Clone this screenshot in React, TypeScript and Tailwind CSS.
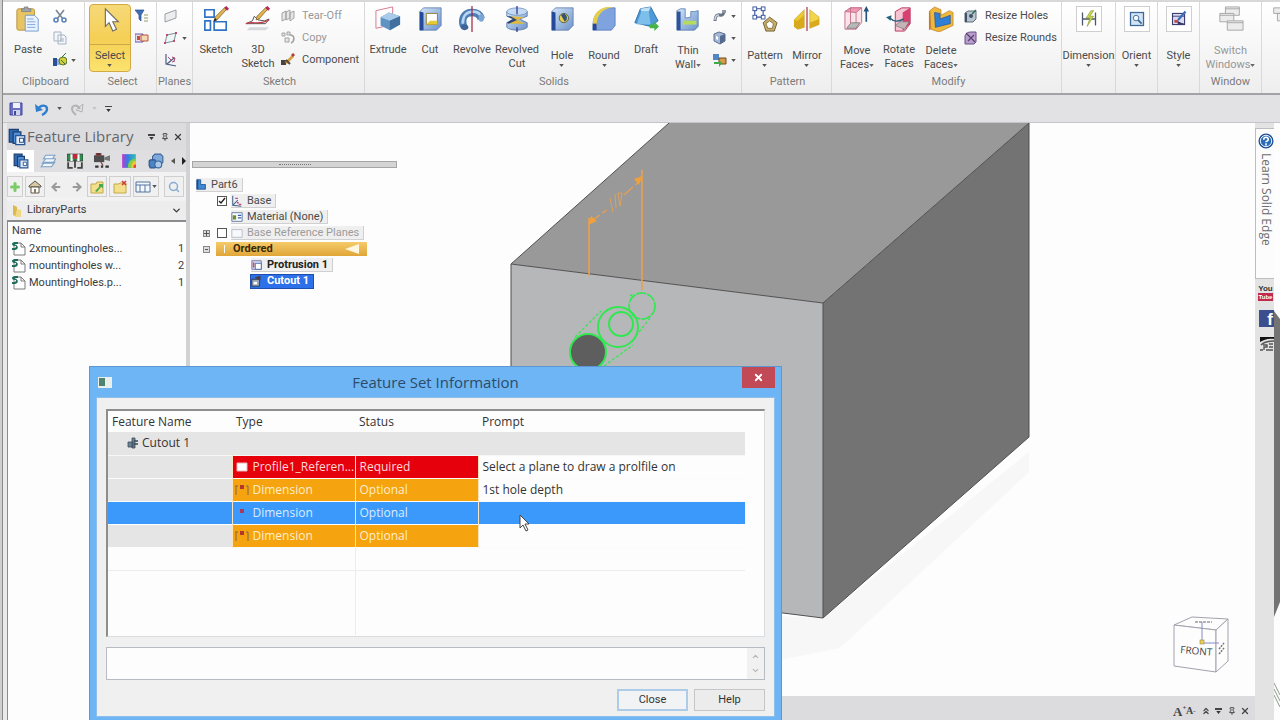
import React from 'react';
import clsx from 'clsx';
import { ArrowLeft, ArrowRight, ChevronDown, ChevronUp, ChevronsUp, Pin, Plus, Search, X } from 'lucide-react';

interface IconProps {
  name: string;
  className?: string;
}

const ICONS: Record<string, React.ReactNode> = {
  paste: (
    <>
      <rect x="2" y="3" width="19" height="23" rx="2" fill="#e8c560" stroke="#b79140" />
      <path d="M7 5V3h3V1h4v2h3v3H7z" fill="#9ea4ad" stroke="#6f757d" strokeWidth=".7" />
      <path d="M11 10h10l4 4v13H11z" fill="#eaf3fd" stroke="#6f9bd1" />
      <path d="M13 14h7M13 17h9M13 20h9M13 23h9" stroke="#7ba6dc" />
    </>
  ),
  cursor: <path d="M9 3v19l4-4 4 9 4-2-4-8h6z" fill="#fff" stroke="#6b6b6b" strokeWidth="1.2" />,
  sketch: (
    <>
      <path d="M2 4h10v8H2zM2 16h6v10H2zM12 17h13v9H12z" fill="#fff" stroke="#2f74c4" strokeWidth="1.8" />
      <path d="M12 16l3-1L26 3l-2-2L13 12z" fill="#e3b44e" stroke="#7a5c2a" strokeWidth=".8" />
      <path d="M24 1l3 3" stroke="#b5265d" strokeWidth="3" />
      <path d="M11 17l2-4 2 2z" fill="#222" />
    </>
  ),
  sketch3d: (
    <>
      <path d="M1 19l7-3 2-5 4 4 7 1 5-2-4 5z" fill="none" stroke="#4a4a4a" />
      <path d="M1 19c8-3 14 2 25-4" stroke="#c43c4a" fill="none" strokeWidth="1.3" />
      <path d="M12 15l3-1L25 3l-2-2L13 11z" fill="#e3b44e" stroke="#7a5c2a" strokeWidth=".8" />
      <path d="M23 1l3 3" stroke="#b5265d" strokeWidth="3" />
      <path d="M5 23h21l-4 3H2z" fill="#d5d8dc" />
    </>
  ),
  extrude: (
    <>
      <path d="M1 5l18-4v19L1 24z" fill="none" stroke="#d5758a" />
      <path d="M6 12l9-5 12 4v9l-11 6-10-5z" fill="#5f93c4" />
      <path d="M6 12l9-5 12 4-11 5z" fill="#a9cbea" />
      <path d="M16 16l11-5v9l-11 6z" fill="#416f9e" />
    </>
  ),
  cut: (
    <>
      <path d="M3 6l4-4h19v19l-5 5H3z" fill="url(#steel)" stroke="#5474a8" strokeWidth=".8" />
      <path d="M3 6l4 1v19H3z" fill="#24489a" />
      <path d="M10 8h12v12H10z" fill="#fff" stroke="#8c7a2c" />
      <path d="M10 20l4-4h8v4z" fill="#e6c832" />
    </>
  ),
  revolve: (
    <>
      <path d="M5 22c-3-9 1-15 9-15 6 0 9 3 10 7" fill="none" stroke="#4d7db4" strokeWidth="8" />
      <path d="M4 19c0-8 4-13 11-13 4 0 7 2 8 4" fill="none" stroke="#b7d6f2" strokeWidth="3" />
      <ellipse cx="6" cy="23" rx="4" ry="3" fill="#3e6498" />
      <ellipse cx="24" cy="13" rx="3" ry="4" fill="#7aa7d5" />
      <path d="M14 0v28" stroke="#9c2340" strokeWidth="1.3" />
    </>
  ),
  revcut: (
    <>
      <path d="M3 6v5l7 3-7 4v5c4 4 18 4 22 0v-5l-8-4 8-3V6z" fill="url(#steel)" stroke="#48699a" strokeWidth=".8" />
      <ellipse cx="14" cy="6" rx="11" ry="4" fill="#c3daf2" stroke="#5f82b2" strokeWidth=".7" />
      <path d="M6 11l16 1-8 3 9 4H6l6-4z" fill="#e0b93a" />
      <path d="M3 11h4l7 4-9 4-2-1 7-4z" fill="#2c4274" />
      <path d="M14 0v9M14 23v5" stroke="#2c2c8c" strokeWidth="1.3" />
    </>
  ),
  hole: (
    <>
      <path d="M3 6l4-4h19v19l-5 5H3z" fill="url(#steel)" stroke="#5474a8" strokeWidth=".8" />
      <path d="M3 6l4 1v19H3z" fill="#24489a" />
      <circle cx="16" cy="13" r="5" fill="#e6cf50" stroke="#58603f" />
      <path d="M13 10a5 5 0 0 1 3-2 5 5 0 0 1 1 9z" fill="#355276" />
    </>
  ),
  round: (
    <>
      <path d="M2 22C2 9 9 2 19 2h7v19l-4 5H2z" fill="#7fa3df" stroke="#5575b5" strokeWidth=".8" />
      <path d="M2 20C2 7 10 1 20 1l3 1C12 3 6 10 6 22z" fill="#e6cf48" />
      <path d="M2 19h4v7H2z" fill="#24489a" />
    </>
  ),
  draft: (
    <>
      <path d="M8 3l11-2 8 15-8 6-17-4z" fill="#4c9bd8" stroke="#2b6da8" />
      <path d="M8 3l11-2-2 5H9z" fill="#bfe0f6" />
      <path d="M9 6h8l2 14H4z" fill="#8ac8f0" opacity=".8" />
      <path d="M18 20h5v-3l5 5-5 5v-3h-5z" fill="#45b545" />
    </>
  ),
  thin: (
    <>
      <path d="M2 5l4-2h5v10l6-1V6h4l4-1v17l-4 4H2z" fill="url(#steel)" stroke="#4c74a8" strokeWidth=".8" />
      <path d="M2 6h4v20H2z" fill="#2c539c" />
      <path d="M10 16h13v4H8z" fill="#b5dc5a" />
    </>
  ),
  pattern: (
    <>
      <path d="M3 3h9v9H3z" fill="none" stroke="#35529a" strokeWidth="1.2" />
      <g fill="#fff" stroke="#35529a">
        <rect x="1" y="1" width="4" height="4" />
        <rect x="10" y="1" width="4" height="4" />
        <rect x="1" y="10" width="4" height="4" />
        <rect x="10" y="10" width="4" height="4" />
      </g>
      <path d="M19 12l8 6-3 9h-9l-3-9z" fill="#c8b06a" stroke="#6c5a30" />
      <path d="M19 16l4 3-1 5h-5l-2-5z" fill="#fff" stroke="#6c5a30" strokeWidth=".8" />
    </>
  ),
  mirror: (
    <>
      <path d="M0 15L11 4v19l-7 2-4-3z" fill="#ecc92e" stroke="#bb992a" strokeWidth=".6" />
      <path d="M0 15l4 1v9l-4-3zM4 16l7-6v13l-7 2z" fill="#d9a91d" />
      <path d="M17 4l10 8v8l-10 4z" fill="#f2d548" stroke="#bb992a" strokeWidth=".6" />
      <path d="M17 18l10-4v6l-10 4z" fill="#dba91d" />
      <path d="M14 1v26" stroke="#b03040" strokeWidth="1.3" />
    </>
  ),
  moveFaces: (
    <>
      <path d="M1 6l6-4h12v16l-6 7H1z" fill="#fbe3ea" stroke="#c66f8a" />
      <path d="M1 6l6-4h12l-6 5z" fill="#ee9ab4" stroke="#c66f8a" />
      <path d="M13 7v18M7 2v17" stroke="#c66f8a" />
      <path d="M5 21l3-3h9l-4 6H3z" fill="#b8b8b8" stroke="#666" strokeWidth=".7" />
      <path d="M24 17V4" stroke="#26547c" strokeWidth="1.8" />
      <path d="M24 0l3 6h-6z" fill="#26547c" />
    </>
  ),
  rotateFaces: (
    <>
      <path d="M10 6l7-4h9v17l-6 8H10z" fill="#f5c4d2" stroke="#b3325c" />
      <path d="M18 7l8-5v17l-8 8z" fill="#d8406f" />
      <path d="M10 21l5-4h10l-5 8z" fill="#c4b4ba" stroke="#666" strokeWidth=".6" />
      <path d="M4 13c4 4 10 4 15 1" fill="none" stroke="#26607c" strokeWidth="1.6" />
      <path d="M0 12l6-2-1 6z" fill="#26607c" />
    </>
  ),
  deleteFaces: (
    <>
      <path d="M1 6l6-4v20l-6 4z" fill="#e46c2c" />
      <path d="M2 5l5-4 7 3v6l9-5 4 2v14l-15 7-9-3z" fill="#eeb83a" stroke="#b8792a" strokeWidth=".7" />
      <path d="M7 7l6 1v6l11-4v9L8 23z" fill="#2f7fd6" stroke="#1d4f9a" strokeWidth=".7" />
    </>
  ),
  dimension: (
    <>
      <path d="M7 7v14M21 7v14M7 14h14" stroke="#4a5a6c" strokeWidth="1.4" />
      <path d="M16 5l-5 8h4l-3 9 7-11h-4l4-6z" fill="#c9d84a" stroke="#7f8c26" strokeWidth=".6" />
    </>
  ),
  orient: (
    <>
      <rect x="7" y="7" width="14" height="14" fill="#d5e4f3" stroke="#3d6a9c" strokeWidth="1.4" />
      <circle cx="13" cy="13" r="3" fill="#f4f9ff" stroke="#3d6a9c" />
      <path d="M15 15l4 4" stroke="#3d6a9c" strokeWidth="2" />
    </>
  ),
  styles: (
    <>
      <rect x="7" y="8" width="13" height="12" fill="#dadaf0" stroke="#3c3c74" strokeWidth="1.2" />
      <path d="M7 11h13M10 16h3v3h6" stroke="#3c3c74" />
      <path d="M9 15h4v3H9z" fill="#c24848" />
      <path d="M13 15l8-9" stroke="#3d6eb4" strokeWidth="2.4" />
    </>
  ),
  windows: (
    <g fill="#ececec" stroke="#a4a4a4">
      <path d="M8 1h15v9H8zM8 3h15" />
      <path d="M2 8h15v9H2zM2 10h15" />
      <path d="M10 16h17v10H10zM10 18h17" />
    </g>
  ),
  arrange: <path d="M4 2h16v6H4zM8 8h14v8H8zM14 16l8 8" fill="#ececec" stroke="#a4a4a4" />,
  scissors: (
    <g fill="none" stroke="#5b82bb" strokeWidth="1.6">
      <path d="M3 1l7 9M11 1L4 10" stroke="#7c8794" />
      <circle cx="3" cy="11" r="2" />
      <circle cx="11" cy="11" r="2" />
    </g>
  ),
  copy: <path d="M1 1h7v9H1zM5 4h6l2 2v7H5zM7 8h4M7 10h4" fill="#f3f6fa" stroke="#a6b3c2" />,
  brush: (
    <>
      <path d="M0 5h4v8H0z" fill="#2c4f99" />
      <path d="M4 6h5v6H4z" fill="#8fb1da" />
      <circle cx="10" cy="8" r="4" fill="#d4cf3b" stroke="#557a2e" />
      <path d="M9 4l4-4M8 7l4 4" stroke="#39703a" />
    </>
  ),
  filter: (
    <>
      <path d="M0 1h9L6 6v6L4 10V6z" fill="#3e6fb5" stroke="#264f8d" strokeWidth=".7" />
      <path d="M9 6h4M9 9h4M9 12h4" stroke="#9a9a60" />
    </>
  ),
  selbox: (
    <>
      <path d="M0 3h8v8H0z" fill="#e3dfef" stroke="#6b5aa0" />
      <path d="M6 4h7v6H6z" fill="#f3d9b4" stroke="#c0503c" />
      <path d="M2 5h3v4H2z" fill="#c0503c" />
    </>
  ),
  plane: <path d="M1 5l11-4v8L1 13z" fill="#ecedef" stroke="#9a9fa6" />,
  planePts: (
    <>
      <path d="M3 4l9-2-2 8-9 2z" fill="#eef6f3" stroke="#7b8c9a" />
      <path d="M2 3h2v2H2zM11 1h2v2h-2zM0 11h2v2H0zM9 9h2v2H9z" fill="#c64a6a" />
    </>
  ),
  axes: (
    <>
      <path d="M2 1v10l10 2M3 11l7-6" fill="none" stroke="#4a5f86" strokeWidth="1.2" />
      <path d="M8 4l3 1-1 3M4 4l3 3M8 9l3-1" fill="none" stroke="#a14a72" />
    </>
  ),
  tearoff: <path d="M1 4l4-2v8l-4 2zM5 3l4-2v8l-4 2zM9 4l4-2v7l-4 3z" fill="#e6e6e6" stroke="#a3a3a3" />,
  copyGrey: (
    <g fill="#e6e6e6" stroke="#a3a3a3">
      <path d="M1 2h3v3H1zM6 1h3v3H6zM4 7h4v4H4z" />
      <path d="M9 4c5 0 5 6 1 8" fill="none" strokeWidth="1.6" />
    </g>
  ),
  component: (
    <>
      <path d="M0 7h5v5H0z" fill="#4a4440" />
      <path d="M4 9l7-7 2 2-7 7z" fill="#d8a048" />
      <path d="M11 1l2 2" stroke="#b53a3a" strokeWidth="3" />
      <path d="M5 7l4 4" stroke="#5a4a3a" strokeWidth="2" />
    </>
  ),
  sweep: (
    <>
      <path d="M2 12c0-5 2-7 5-6s4-2 4-4" fill="none" stroke="#697483" strokeWidth="3" />
      <path d="M2 11c0-4 2-5 4-5" fill="none" stroke="#c9d3de" strokeWidth="1.5" />
      <path d="M9 1h4v3H9z" fill="#8d98a8" />
    </>
  ),
  rib: (
    <>
      <path d="M1 3l5-2 6 2v7l-5 3-6-3z" fill="#a4b8d6" stroke="#5f7191" />
      <path d="M7 5l5-2v7l-5 3z" fill="#566a8f" />
      <path d="M3 5l2 1v3l-2-1z" fill="#fff" />
    </>
  ),
  bool: (
    <>
      <path d="M0 1h6v6H0z" fill="#4e86c8" />
      <path d="M6 5h7v6H6z" fill="#d79a4a" stroke="#6c4a22" />
      <path d="M1 9h5V7l3 3-3 4v-3H1z" fill="#3faa48" />
    </>
  ),
  resizeHole: (
    <>
      <path d="M1 4l3-2h8v8l-3 3H1z" fill="#b7c3cf" stroke="#5c6b7a" />
      <path d="M1 4h2v9H1z" fill="#3d536b" />
      <circle cx="7" cy="7" r="2" fill="#41525f" />
      <path d="M8 5l4-4" stroke="#2f6a4e" strokeWidth="1.4" />
    </>
  ),
  resizeRound: (
    <>
      <path d="M1 5c1-3 3-4 6-4h5v10l-2 2H1z" fill="#b9a0cc" stroke="#6b4f86" />
      <path d="M2 2l9 9M4 10l6-6" stroke="#57406f" strokeWidth="1.2" />
    </>
  ),
  save: (
    <>
      <path d="M1 1h12v12H1z" fill="#6a70c4" stroke="#42479a" />
      <path d="M4 1h7v5H4z" fill="#f0f2fb" />
      <path d="M4 8h7v5H4z" fill="#cfd3ea" />
      <path d="M5 9h2v4H5z" fill="#42479a" />
    </>
  ),
  undo: (
    <>
      <path d="M3 7c3-5 9-4 9 0 0 3-3 5-5 6" fill="none" stroke="#2e7fd0" strokeWidth="2.4" />
      <path d="M0 2l1 8 7-2z" fill="#2e7fd0" />
    </>
  ),
  redo: (
    <>
      <path d="M10 7C7 2 2 3 2 7c0 3 2 4 4 6" fill="none" stroke="#b2b2b6" strokeWidth="2" />
      <path d="M13 2l-1 8-6-2z" fill="none" stroke="#b2b2b6" />
    </>
  ),
  library: (
    <>
      <path d="M1 1h7v10H1z" fill="#2f68b0" stroke="#1d3f73" />
      <path d="M4 3h6v9H4z" fill="#4f8fd8" stroke="#1d3f73" />
      <path d="M6 6h7v7H6z" fill="#dce9f7" stroke="#2b5590" />
      <path d="M9 8h3v3H9z" fill="#fff" stroke="#2b5590" strokeWidth=".8" />
    </>
  ),
  layers: <path d="M1 12l3-4h9l-3 4zM2 9l3-4h9l-3 4zM3 5l2-3h8l-2 3z" fill="#eef4fa" stroke="#7aa0c4" strokeWidth=".9" />,
  sensors: (
    <>
      <path d="M0 1h14v6H0z" fill="#2b8f4e" stroke="#333" strokeWidth=".7" />
      <path d="M3 1h2v6H3zM9 1h2v6H9z" fill="#fff" />
      <path d="M5 1h4v4H5z" fill="#c2283a" />
      <path d="M1 8v5h4M13 8v5H9M7 6v7" fill="none" stroke="#444" strokeWidth="1.6" />
    </>
  ),
  camera: (
    <>
      <path d="M0 2h9v6H0z" fill="#4d4d4d" />
      <path d="M9 4l5-2v5l-5-1z" fill="#777" />
      <path d="M2 0h4v2H2zM6 8l2 3" fill="#333" stroke="#8a4040" />
      <path d="M1 12h3M6 12h2M10 12h3" stroke="#333" strokeWidth="2" />
    </>
  ),
  palette: (
    <>
      <path d="M1 1h12v12H1z" fill="url(#heat)" />
      <path d="M13 5v8H6c0-5 2-8 7-8z" fill="#7ed048" />
      <path d="M13 7v6H9c0-4 1-6 4-6z" fill="#f0c43a" />
      <path d="M13 10v3h-2c0-2 0-3 2-3z" fill="#e23b30" />
    </>
  ),
  puzzle: (
    <>
      <path d="M6 1h5l2 2v5l-2 2H6L4 8V3z" fill="#7fa9d8" stroke="#3b669d" />
      <path d="M2 6h4l1 2v4l-1 1H2l-1-2V7z" fill="#4c83c3" stroke="#2e5488" />
      <circle cx="9" cy="10" r="3" fill="#a9c8ea" stroke="#3b669d" />
    </>
  ),
  home: (
    <>
      <path d="M1 6l6-5 6 5v1H1z" fill="#d9c9a4" stroke="#5c554b" />
      <path d="M3 7h8v6H3z" fill="#fff" stroke="#5c554b" />
      <path d="M6 9h2v4H6z" fill="#8c7b5a" />
    </>
  ),
  folderUp: (
    <>
      <path d="M1 4h5l1-2h6v11H1z" fill="#f4e08c" stroke="#c4a845" />
      <path d="M5 11l4-4V4h4v4l-2-1-4 5z" fill="#4ba84f" />
    </>
  ),
  folderNew: (
    <>
      <path d="M1 4h5l1-1h6v10H1z" fill="#f4e08c" stroke="#c4a845" />
      <path d="M9 1l4 4M13 1L9 5" stroke="#d23b3b" strokeWidth="1.6" />
    </>
  ),
  grid: <path d="M1 2h14v10H1zM1 5h14M5 5v7M10 5v7" fill="#f4f8fd" stroke="#53759f" />,
  folder: (
    <>
      <path d="M2 1l4 2v10l-4-2z" fill="#dcb94b" />
      <path d="M6 5l4 1v7H4z" fill="#f0d883" />
    </>
  ),
  part: (
    <>
      <path d="M2 1h7l4 4v8H2z" fill="#fff" stroke="#7b7b7b" />
      <path d="M9 1v4h4" fill="none" stroke="#7b7b7b" />
      <path d="M6 0H3C1 0 0 1 0 2s1 2 3 2 1 2-1 2H0v2h3c3 0 4-4 1-5-2 0-1-1 2-1z" fill="#1d6e5c" />
    </>
  ),
  solid: (
    <>
      <path d="M1 1h5v6h6v6H1z" fill="#3d8ad6" stroke="#1c4d8c" />
      <path d="M1 1h2v12H1z" fill="#1c4d8c" />
    </>
  ),
  base: (
    <>
      <path d="M2 1v11l10 1M2 12l6-6" fill="none" stroke="#48628e" strokeWidth="1.2" />
      <path d="M5 4h3M7 9h2M9 11h3" stroke="#c0467c" strokeWidth="1.6" />
    </>
  ),
  material: (
    <>
      <path d="M1 2h12v10H1z" fill="#fff" stroke="#4f6c98" />
      <path d="M2 5h4v5H2z" fill="#6f8c35" />
      <path d="M8 5h4M8 8h4" stroke="#2f5fb0" strokeWidth="1.4" />
    </>
  ),
  refPlane: <path d="M1 3h12v9H1z" fill="#f7f9fc" stroke="#b3bac6" />,
  protrusion: (
    <>
      <path d="M1 2h11v10H1z" fill="#d9dff0" stroke="#6d6da8" />
      <path d="M5 5h7v7H5z" fill="#fff" stroke="#3d62b0" />
      <path d="M2 4h2v6H2z" fill="#b8566a" />
    </>
  ),
  cutout: (
    <>
      <path d="M1 5h9v8H1z" fill="#9aa6b6" stroke="#2d3743" />
      <path d="M3 8h4v3H3z" fill="#fff" />
      <path d="M4 3l7-2v5z" fill="#4d3d35" />
    </>
  ),
  cutoutRow: (
    <>
      <path d="M2 6h5v5H2zM6 2h3v10H6z" fill="#6e8496" stroke="#37495a" strokeWidth=".8" />
      <path d="M8 5h4M8 8h4" stroke="#37495a" strokeWidth="1.4" />
    </>
  ),
  dimRow: (
    <>
      <path d="M1 3v9M13 3v9" stroke="#7e6a4a" />
      <path d="M0 3h3M11 3h2" stroke="#7e6a4a" />
      <path d="M5 2h4v4H5z" fill="#b4362c" />
    </>
  ),
  dimRowActive: <path d="M5 3h4v4H5z" fill="#a83a5c" />,
  profile: <path d="M2 3h10v8H2z" fill="#fff" stroke="#e8b8b8" />,
  help: (
    <>
      <circle cx="7" cy="7" r="6" fill="#2a6cb8" stroke="#1d4f90" strokeWidth="1.2" />
      <circle cx="7" cy="7" r="5" fill="none" stroke="#fff" strokeWidth=".8" />
      <path d="M5 6c0-3 4-3 4 0 0 1-2 1-2 2M7 9v2" fill="none" stroke="#fff" strokeWidth="1.4" />
    </>
  ),
  news: (
    <>
      <path d="M0 0h14v2C8 1 4 3 0 5z" fill="#111" />
      <path d="M1 8c3-3 8-4 13-4M3 8h4v2H4v3M9 7h4M9 10h4M0 13h3M6 13h7" fill="none" stroke="#555" strokeWidth="1.4" />
    </>
  ),
  appWin: (
    <>
      <path d="M0 2h14v11H0z" fill="#e9efe9" />
      <path d="M1 3h6v8H1z" fill="#4f8570" />
    </>
  ),
};

const Icon: React.FC<IconProps> = ({ name, className = 'h-[14px] w-[14px]' }) => (
  <svg viewBox="0 0 14 14" className={clsx('flex-none', className)} aria-hidden="true">
    {ICONS[name]}
  </svg>
);

const Caret: React.FC<{ className?: string }> = ({ className = 'fill-[#555]' }) => (
  <svg viewBox="0 0 6 4" className={clsx('h-[3px] w-[5px] flex-none', className)} aria-hidden="true">
    <path d="M0 0h6L3 4z" />
  </svg>
);

interface BigButtonProps {
  icon: string;
  lines: string[];
  caret?: 'below' | 'inline';
  active?: boolean;
  framed?: boolean;
  disabled?: boolean;
  className?: string;
}

const BigButton: React.FC<BigButtonProps> = ({ icon, lines, caret, active, framed, disabled, className = 'w-[42px]' }) => (
  <button
    type="button"
    disabled={disabled}
    className={clsx(
      'flex h-[68px] flex-none flex-col items-center border whitespace-nowrap',
      active
        ? 'rounded-sm border-[#d3a944] bg-linear-to-b from-[#f6d978] via-[#f5cf55] to-[#fbe36f]'
        : 'border-transparent',
      disabled && 'text-[#979797]',
      className
    )}
  >
    <span
      className={clsx(
        'mt-px flex h-[26px] w-[26px] flex-none items-center justify-center',
        framed && 'border border-[#cfcfcf] bg-white'
      )}
    >
      <svg viewBox="0 0 28 28" className="h-[26px] w-[26px] flex-none" aria-hidden="true">
        {ICONS[icon]}
      </svg>
    </span>
    {active && <span className="mt-3 mb-1 w-full border-t border-[#cfa548]" />}
    <span
      className={clsx(
        'flex flex-col items-center',
        !active && caret === 'below' && 'mt-[17px]',
        !active && caret === 'inline' && 'mt-3',
        !active && !caret && 'mt-[11px]'
      )}
    >
      {lines.map((line, i) => (
        <span key={line} className="flex items-center">
          {line}
          {caret === 'inline' && i === lines.length - 1 && <Caret className="fill-[#666]" />}
        </span>
      ))}
      {caret === 'below' && <Caret className="mt-px fill-[#555]" />}
    </span>
  </button>
);

interface SmallButtonProps {
  icon: string;
  label: string;
  showLabel?: boolean;
  caret?: boolean;
  disabled?: boolean;
}

const SmallButton: React.FC<SmallButtonProps> = ({ icon, label, showLabel, caret, disabled }) => (
  <button
    type="button"
    aria-label={label}
    disabled={disabled}
    className="flex h-[22px] items-center gap-1 whitespace-nowrap disabled:text-[#989898]"
  >
    <Icon name={icon} />
    {showLabel && <span className="pl-[3px]">{label}</span>}
    {caret && <Caret />}
  </button>
);

interface GroupProps {
  caption?: string;
  className: string;
  children: React.ReactNode;
}

const Group: React.FC<GroupProps> = ({ caption, className, children }) => (
  <section className={clsx('flex h-full flex-none flex-col border-r border-[#d9d9db]', className)}>
    <div className="flex h-[71px] pt-0.5">{children}</div>
    {caption && <h2 className="pt-0.5 text-center text-[#7b7b7b]">{caption}</h2>}
  </section>
);

const Ribbon: React.FC = () => (
  <header className="flex h-[95px] flex-none overflow-hidden border-t-2 border-b-2 border-t-[#d8d8d8] border-b-[#a3a3a5] bg-linear-to-b from-white to-[#eeeeef] font-['Roboto',sans-serif] text-[11px] leading-[14px] text-[#4b4b4b]">
    <Group caption="Clipboard" className="w-[82px] pl-1">
      <BigButton icon="paste" lines={['Paste']} />
      <div className="pt-px pl-1">
        <SmallButton icon="scissors" label="Cut to clipboard" />
        <SmallButton icon="copy" label="Copy to clipboard" />
        <SmallButton icon="brush" label="Format painter" caret />
      </div>
    </Group>
    <Group caption="Select" className="w-[72px] pl-1">
      <BigButton icon="cursor" lines={['Select']} caret="below" active />
      <div className="pt-px pl-1">
        <SmallButton icon="filter" label="Selection filter" />
        <SmallButton icon="selbox" label="Selection box" />
      </div>
    </Group>
    <Group caption="Planes" className="w-[36px]">
      <div className="pt-px pl-[7px]">
        <SmallButton icon="plane" label="Coincident plane" />
        <SmallButton icon="planePts" label="More planes" caret />
        <SmallButton icon="axes" label="Coordinate system" />
      </div>
    </Group>
    <Group caption="Sketch" className="w-[172px] pl-0.5">
      <BigButton icon="sketch" lines={['Sketch']} />
      <BigButton icon="sketch3d" lines={['3D', 'Sketch']} />
      <div className="pt-px pl-0.5">
        <SmallButton icon="tearoff" label="Tear-Off" showLabel disabled />
        <SmallButton icon="copyGrey" label="Copy" showLabel disabled />
        <SmallButton icon="component" label="Component" showLabel />
      </div>
    </Group>
    <Group caption="Solids" className="w-[377px] pl-0.5">
      <BigButton icon="extrude" lines={['Extrude']} />
      <BigButton icon="cut" lines={['Cut']} />
      <BigButton icon="revolve" lines={['Revolve']} />
      <BigButton icon="revcut" lines={['Revolved', 'Cut']} className="w-12" />
      <BigButton icon="hole" lines={['Hole']} caret="below" />
      <BigButton icon="round" lines={['Round']} caret="below" />
      <BigButton icon="draft" lines={['Draft']} />
      <BigButton icon="thin" lines={['Thin', 'Wall']} caret="inline" />
      <div className="pt-px pl-1">
        <SmallButton icon="sweep" label="Sweep" caret />
        <SmallButton icon="rib" label="Rib" caret />
        <SmallButton icon="bool" label="Boolean" caret />
      </div>
    </Group>
    <Group caption="Pattern" className="w-[90px] pl-0.5">
      <BigButton icon="pattern" lines={['Pattern']} caret="below" />
      <BigButton icon="mirror" lines={['Mirror']} caret="below" />
    </Group>
    <Group caption="Modify" className="w-[230px] pl-1">
      <BigButton icon="moveFaces" lines={['Move', 'Faces']} caret="inline" />
      <BigButton icon="rotateFaces" lines={['Rotate', 'Faces']} />
      <BigButton icon="deleteFaces" lines={['Delete', 'Faces']} caret="inline" />
      <div className="pt-px pl-0.5">
        <SmallButton icon="resizeHole" label="Resize Holes" showLabel />
        <SmallButton icon="resizeRound" label="Resize Rounds" showLabel />
      </div>
    </Group>
    <Group className="w-[54px]">
      <BigButton icon="dimension" lines={['Dimension']} caret="below" framed className="w-full" />
    </Group>
    <Group className="w-[42px]">
      <BigButton icon="orient" lines={['Orient']} caret="below" framed className="w-full" />
    </Group>
    <Group className="w-[42px]">
      <BigButton icon="styles" lines={['Style']} caret="below" framed className="w-full" />
    </Group>
    <Group caption="Window" className="w-[62px]">
      <BigButton icon="windows" lines={['Switch', 'Windows']} caret="inline" disabled className="w-full" />
    </Group>
    <div className="flex min-w-0 flex-1 overflow-hidden pt-1 pl-2">
      <svg viewBox="0 0 28 28" className="h-[26px] w-[26px] flex-none" aria-hidden="true">
        {ICONS.arrange}
      </svg>
    </div>
  </header>
);

const QuickAccess: React.FC = () => (
  <nav aria-label="Quick access" className="flex h-[28px] flex-none items-center gap-2 border-b border-[#c4c5c8] bg-[#e2e2e5] px-1.5">
    <button type="button" aria-label="Save" className="flex">
      <Icon name="save" />
    </button>
    <button type="button" aria-label="Undo" className="ml-1 flex items-center gap-2">
      <Icon name="undo" />
      <Caret />
    </button>
    <button type="button" aria-label="Redo" className="flex items-center gap-2">
      <Icon name="redo" />
      <Caret className="fill-[#c4c4c8]" />
    </button>
    <button type="button" aria-label="Customize" className="flex flex-col items-center gap-0.5">
      <span className="w-[7px] border-t border-[#444]" />
      <Caret className="fill-[#333]" />
    </button>
  </nav>
);

const FILES = [
  { name: '2xmountingholes...', count: 1 },
  { name: 'mountingholes w...', count: 2 },
  { name: 'MountingHoles.p...', count: 1 },
];

const toolButton = 'flex h-[21px] flex-none items-center justify-center border border-[#cfcfcf] bg-[#f0f0f0]';

const FeatureLibrary: React.FC = () => (
  <aside className="flex w-[187px] flex-none flex-col border-r-4 border-[#d2d2d4] bg-[#e9e9eb] pl-1 font-['Roboto',sans-serif] text-[11px] text-[#3c3c3c]">
    <div className="flex h-[27px] flex-none items-center bg-[#dcdcdf] pr-0.5 pl-px">
      <Icon name="library" className="h-[18px] w-[18px]" />
      <h1 className="flex-1 pl-px font-['Open_Sans',sans-serif] text-[15px] whitespace-nowrap text-[#66666a]">Feature Library</h1>
      <button type="button" aria-label="Panel menu" className="flex w-[13px] flex-col items-center gap-px">
        <span className="w-[7px] border-t-2 border-[#444]" />
        <Caret className="fill-[#333]" />
      </button>
      <button type="button" aria-label="Pin panel" className="flex w-[13px] justify-center">
        <Pin size={8} strokeWidth={3} />
      </button>
      <button type="button" aria-label="Close panel" className="flex w-[13px] justify-center">
        <X size={10} strokeWidth={3} />
      </button>
    </div>
    <div className="flex h-[22px] flex-none items-center bg-[#dfdfe2]">
      {['library', 'layers', 'sensors', 'camera', 'palette', 'puzzle'].map((tab) => (
        <button
          key={tab}
          type="button"
          aria-label={tab}
          className={clsx('flex h-full w-[27px] flex-none items-center justify-center', tab === 'library' && 'bg-white')}
        >
          <Icon name={tab} className="h-4 w-4" />
        </button>
      ))}
      <button type="button" aria-label="Previous tab" className="flex w-[7px] justify-center">
        <svg viewBox="0 0 4 6" className="h-[6px] w-1 fill-[#555]" aria-hidden="true">
          <path d="M4 0v6L0 3z" />
        </svg>
      </button>
      <button type="button" aria-label="Next tab" className="flex w-[10px] justify-end">
        <svg viewBox="0 0 4 8" className="h-2 w-1 fill-[#222]" aria-hidden="true">
          <path d="M0 0v8l4-4z" />
        </svg>
      </button>
    </div>
    <div className="flex flex-none bg-[#f2f2f2] py-1">
      <button type="button" aria-label="Add" className={clsx(toolButton, 'w-[16px]')}>
        <Plus size={12} strokeWidth={6} className="text-[#7ccb6a]" />
      </button>
      <button type="button" aria-label="Home" className={clsx(toolButton, 'ml-0.5 w-[20px]')}>
        <Icon name="home" />
      </button>
      <button type="button" aria-label="Back" className={clsx(toolButton, 'w-[22px] border-transparent')}>
        <ArrowLeft size={12} strokeWidth={4} className="text-[#9a9a9a]" />
      </button>
      <button type="button" aria-label="Forward" className={clsx(toolButton, 'w-[20px] border-transparent')}>
        <ArrowRight size={12} strokeWidth={4} className="text-[#9a9a9a]" />
      </button>
      <button type="button" aria-label="Up one level" className={clsx(toolButton, 'w-[20px]')}>
        <Icon name="folderUp" />
      </button>
      <button type="button" aria-label="New folder" className={clsx(toolButton, 'ml-0.5 w-[22px]')}>
        <Icon name="folderNew" />
      </button>
      <button type="button" aria-label="View" className={clsx(toolButton, 'ml-0.5 w-[26px] gap-px')}>
        <svg viewBox="0 0 16 14" className="h-[14px] w-4" aria-hidden="true">
          {ICONS.grid}
        </svg>
        <Caret />
      </button>
      <button type="button" aria-label="Search" className={clsx(toolButton, 'ml-[5px] w-[20px]')}>
        <Search size={12} strokeWidth={3} className="text-[#86abd0]" />
      </button>
    </div>
    <button type="button" className="flex h-[19px] flex-none items-center gap-0.5 bg-[#ededee] px-1 text-left">
      <Icon name="folder" />
      <span className="flex-1">LibraryParts</span>
      <ChevronDown size={11} strokeWidth={3} />
    </button>
    <div className="flex-1 border-t-2 border-l border-[#8b8b8d] bg-[#fdfdfd] pl-1">
      <table className="w-full">
        <thead>
          <tr className="h-[18px] text-left">
            <th className="font-normal">Name</th>
            <th aria-label="Count" className="w-2" />
          </tr>
        </thead>
        <tbody>
          {FILES.map((file) => (
            <tr key={file.name} className="h-[17px] leading-[17px]">
              <td>
                <span className="flex items-center gap-[3px] whitespace-nowrap">
                  <Icon name="part" />
                  {file.name}
                </span>
              </td>
              <td>{file.count}</td>
            </tr>
          ))}
        </tbody>
      </table>
    </div>
  </aside>
);

const treeLabel = 'flex h-[14px] items-center gap-1 border-r border-b border-[#d0d0d0] bg-[#efefef] pr-1 whitespace-nowrap';

const PathFinder: React.FC = () => (
  <div className="relative w-[207px] pt-[38px] pl-0.5 font-['Roboto',sans-serif] text-[11px] text-[#4b4b4b]">
    <div className="flex h-[7px] items-center justify-center border border-[#a6a6a6] bg-[#d4d4d4]">
      <span className="w-8 border-t border-dotted border-[#777]" />
    </div>
    <ul className="pt-[9px] pl-1 leading-[14px]">
      <li className="flex h-4 items-center">
        <span className={treeLabel}>
          <Icon name="solid" className="h-[11px] w-[11px]" />
          Part6
        </span>
      </li>
      <li className="flex h-4 items-center pl-[21px]">
        <label className="flex items-center gap-1">
          <input type="checkbox" defaultChecked className="sr-only" />
          <span className="flex h-[10px] w-[10px] items-center justify-center border border-[#555] bg-white">
            <svg viewBox="0 0 8 8" className="h-2 w-2" aria-hidden="true">
              <path d="M1 4l2 2 4-5" fill="none" stroke="#222" strokeWidth="1.4" />
            </svg>
          </span>
          <span className={treeLabel}>
            <Icon name="base" className="h-3 w-3" />
            Base
          </span>
        </label>
      </li>
      <li className="flex h-4 items-center pl-[35px]">
        <span className={treeLabel}>
          <Icon name="material" className="h-3 w-3" />
          Material (None)
        </span>
      </li>
      <li className="flex h-4 items-center pl-[7px]">
        <button type="button" aria-label="Expand" className="flex h-[7px] w-[7px] items-center justify-center border border-[#888] bg-[#ddd]">
          <svg viewBox="0 0 5 5" className="h-[5px] w-[5px]" aria-hidden="true">
            <path d="M0 2h5v1H0zM2 0h1v5H2z" fill="#555" />
          </svg>
        </button>
        <label className="flex items-center gap-1 pl-[7px] text-[#9b9b9b]">
          <input type="checkbox" className="sr-only" />
          <span className="h-[10px] w-[10px] border border-[#555] bg-white" />
          <span className={treeLabel}>
            <Icon name="refPlane" className="h-3 w-3" />
            Base Reference Planes
          </span>
        </label>
      </li>
      <li className="flex h-4 items-center pl-[7px]">
        <button type="button" aria-label="Collapse" className="flex h-[7px] w-[7px] items-center justify-center border border-[#888] bg-[#ddd]">
          <span className="w-[3px] border-t border-[#555]" />
        </button>
        <span className="ml-[6px] flex h-[14px] w-[151px] items-center bg-linear-to-b from-[#f5cb69] to-[#e0a537] pr-2 pl-2 font-bold text-[#3b2a08]">
          <span className="mr-2 h-2 border-l border-white" />
          <span className="flex-1">Ordered</span>
          <svg viewBox="0 0 14 10" className="h-[10px] w-[14px] fill-[#fff6e0]" aria-hidden="true">
            <path d="M0 5l14-5v10z" />
          </svg>
        </span>
      </li>
      <li className="flex h-4 items-center pl-[55px] font-bold text-[#222]">
        <span className={treeLabel}>
          <Icon name="protrusion" className="h-3 w-3" />
          Protrusion 1
        </span>
      </li>
      <li className="flex h-4 items-center pl-[54px] font-bold">
        <span className="flex h-[15px] items-center gap-1 border border-[#1f4fae] bg-[#2c71ea] pr-1 text-white">
          <Icon name="cutout" className="h-3 w-3" />
          Cutout 1
        </span>
      </li>
    </ul>
  </div>
);

const Model: React.FC = () => (
  <svg viewBox="190 123 1065 573" className="absolute top-0 left-0 h-[573px] w-[1065px]" aria-label="Part model">
    <path d="M823 618L1029 452v20L840 648l-60 12v-44z" fill="#f7f7f7" />
    <path d="M511 264L669 123h360L823 303z" fill="#999" />
    <path d="M511 264l312 39v315l-312-39z" fill="#b6b7b9" />
    <path d="M823 303l206-180v314L823 618z" fill="#737373" />
    <path d="M669 123L511 264v315l312 39 206-181V123M511 264l312 39v315M823 303l206-180" fill="none" stroke="#505050" />
    <g stroke="#e8a050" fill="none">
      <path d="M589 218v58M642 170v120" strokeWidth="1.6" />
      <path d="M590 222l17-12M624 195l17-15" strokeWidth="1.2" strokeDasharray="12 3" />
      <path d="M610 198l3 14M615 194l1 14M618 193l2 13 2-13z" strokeWidth=".9" />
    </g>
    <path d="M588 225l3-9 6 5zM642 176l-3 9-5-6z" fill="#f0a03c" />
    <g fill="none" stroke="#2fe84f" strokeWidth="2">
      <circle cx="642" cy="306" r="13" strokeWidth="1.6" strokeDasharray="10 1" />
      <circle cx="618" cy="327" r="20" />
      <circle cx="621" cy="324" r="12" />
      <path d="M575 337l26-26M630 296l4-3M604 366l29-21M636 336l14-18" strokeDasharray="3 2" strokeWidth="1.2" />
      <circle cx="588" cy="352" r="18" fill="#5e5e5e" />
    </g>
    <g fill="#fdfdfd" stroke="#a2a2ae">
      <path d="M1174 625l18-8 36 2-12 11z" />
      <path d="M1174 625l42 5v42l-42-6z" />
      <path d="M1216 630l12-11v42l-12 11z" />
    </g>
    <path d="M1202 622v21h17" fill="none" stroke="#8888c8" />
    <rect x="1200" y="640" width="4" height="4" fill="#e8d060" stroke="#a08a30" strokeWidth=".6" />
    <path d="M1195 622h17" stroke="#999" strokeWidth="1.5" strokeDasharray="3 1" />
    <path d="M1219 649l5-6M1219 654l5-6" stroke="#777" strokeWidth="1.500" strokeDasharray="2 1" />
    <text x="1180" y="653" transform="rotate(5 1180 653)" className="fill-[#444] font-['Open_Sans',sans-serif] text-[10px]">
      FRONT
    </text>
  </svg>
);

const barButton = 'flex w-[13px] flex-col items-center gap-px';

const StatusBar: React.FC = () => (
  <footer className="relative flex h-[24px] flex-none items-center justify-end bg-[#dcdcde] pt-1.5 pr-1 font-['Liberation_Serif',serif] leading-none font-bold text-[#444]">
    <button type="button" aria-label="Larger text" className="flex w-[13px] text-[13px] leading-none">
      A<span className="text-[7px]">+</span>
    </button>
    <button type="button" aria-label="Smaller text" className="flex w-[13px] items-end text-[10px] leading-none">
      A<span className="text-[7px] leading-[10px]">-</span>
    </button>
    <button type="button" aria-label="Collapse prompt bar" className={barButton}>
      <ChevronsUp size={10} strokeWidth={3} />
    </button>
    <button type="button" aria-label="Prompt bar menu" className={barButton}>
      <span className="w-[7px] border-t-2 border-[#444]" />
      <Caret className="fill-[#333]" />
    </button>
    <button type="button" aria-label="Pin prompt bar" className={barButton}>
      <Pin size={8} strokeWidth={3} />
    </button>
    <button type="button" aria-label="Close prompt bar" className={barButton}>
      <X size={10} strokeWidth={3} />
    </button>
  </footer>
);

const SideTabs: React.FC = () => (
  <aside className="flex w-[19px] flex-none flex-col items-center overflow-hidden bg-[#e3e3e4]">
    <button type="button" className="mt-[5px] flex h-[151px] w-full flex-none flex-col items-center gap-1 border border-r-0 border-[#bdbdbd] bg-[#fcfcfc] pt-1 pl-0.5 text-[12px] text-[#6c6c6c]">
      <Icon name="help" className="h-4 w-4" />
      <span className="leading-[14px] whitespace-nowrap [writing-mode:vertical-rl]">Learn Solid Edge</span>
    </button>
    <a href="#youtube" className="mt-[6px] flex flex-col items-center pl-0.5 font-['Liberation_Sans',sans-serif] text-[8px] leading-[8px] font-bold text-[#333]">
      You
      <span className="w-[15px] bg-[#c02a4c] text-center text-[6px] leading-[8px] text-white">Tube</span>
    </a>
    <a href="#facebook" aria-label="Facebook" className="mt-[9px] ml-1 flex h-[17px] w-[15px] flex-none justify-end bg-[#3b4f8c] pr-px font-['Liberation_Sans',sans-serif] text-[17px] leading-[19px] font-bold text-white">
      f
    </a>
    <a href="#news" aria-label="News" className="mt-2.5 ml-1">
      <Icon name="news" />
    </a>
  </aside>
);

interface FeatureRow {
  icon: string;
  type: string;
  status: 'Required' | 'Optional';
  prompt: string;
  selected?: boolean;
}

const ROWS: FeatureRow[] = [
  { icon: 'profile', type: 'Profile1_Referen...', status: 'Required', prompt: 'Select a plane to draw a prolfile on' },
  { icon: 'dimRow', type: 'Dimension', status: 'Optional', prompt: '1st hole depth' },
  { icon: 'dimRowActive', type: 'Dimension', status: 'Optional', prompt: '', selected: true },
  { icon: 'dimRow', type: 'Dimension', status: 'Optional', prompt: '' },
];

const FeatureSetDialog: React.FC = () => (
  <div
    role="dialog"
    aria-labelledby="feature-set-title"
    className="absolute top-[366px] left-[89px] w-[693px] border border-[#5c97d0] bg-[#6db5f5] px-1.5 pb-1 font-['Open_Sans',sans-serif] text-[12px] text-[#333]"
  >
    <div className="flex h-[30px] items-center">
      <span className="flex w-[33px] pl-0.5">
        <Icon name="appWin" />
      </span>
      <h2 id="feature-set-title" className="flex-1 text-center text-[15px] leading-[20px] text-[#2d4b68]">
        Feature Set Information
      </h2>
      <button type="button" aria-label="Close dialog" className="flex h-[21px] w-[33px] items-center justify-center self-start bg-[#c14a56] text-white">
        <X size={11} strokeWidth={4} />
      </button>
    </div>
    <div className="border border-[#8fbfe8] bg-[#f0f0f0] px-[9px] pt-[11px] pb-[5px]">
      <div className="h-[228px] border border-t-2 border-l-2 border-[#d9dde0] border-t-[#8d8d8d] border-l-[#8d8d8d] bg-[#fdfdfd]">
        <table className="w-[637px] table-fixed border-collapse leading-[18px]">
          <colgroup>
            <col className="w-[124px]" />
            <col className="w-[123px]" />
            <col className="w-[123px]" />
            <col />
          </colgroup>
          <thead>
            <tr className="h-[21px] text-left">
              <th className="pl-1 font-normal">Feature Name</th>
              <th className="pl-1 font-normal">Type</th>
              <th className="pl-1 font-normal">Status</th>
              <th className="pl-1 font-normal">Prompt</th>
            </tr>
          </thead>
          <tbody>
            <tr className="h-[23px] border-b border-[#f6f6f6] bg-[#e5e5e5]">
              <td colSpan={4}>
                <span className="flex items-center gap-0.5 pl-[18px]">
                  <Icon name="cutoutRow" />
                  Cutout 1
                </span>
              </td>
            </tr>
            {ROWS.map((row, i) => {
              const tint = row.selected
                ? 'bg-[#3b99fb] text-[#dcecff]'
                : row.status === 'Required'
                  ? 'bg-[#e6000c] text-[#ffd9d9]'
                  : 'bg-[#f5a30e] text-[#ffeecb]';
              return (
                <tr key={i} className={clsx('h-[23px]', row.selected ? 'border-b border-white bg-[#3b99fb]' : 'border-b border-[#fbfbfb]')}>
                  <td className={row.selected ? '' : 'bg-[#e5e5e5]'} />
                  <td className={clsx('border-x border-[#fbe3c0]', tint)}>
                    <span className="flex items-center gap-1 pl-0.5 whitespace-nowrap">
                      <Icon name={row.icon} />
                      {row.type}
                    </span>
                  </td>
                  <td className={clsx('border-x border-[#fbe3c0] pl-1', tint)}>{row.status}</td>
                  <td className="pl-1 whitespace-nowrap">{row.prompt}</td>
                </tr>
              );
            })}
            <tr className="h-[23px] border-b border-[#ececec]">
              <td colSpan={2} className="border-r border-[#ececec]" />
              <td colSpan={2} />
            </tr>
            <tr className="h-[65px]">
              <td colSpan={2} className="border-r border-[#ececec]" />
              <td colSpan={2} />
            </tr>
          </tbody>
        </table>
      </div>
      <div className="mt-[10px] flex h-[33px] border border-[#b6bcc2] bg-[#fdfdfd]">
        <textarea aria-label="Message" readOnly className="h-full flex-1 resize-none overflow-hidden outline-none" />
        <div className="flex w-[17px] flex-col items-center justify-between bg-[#f1f1f1] py-1 text-[#b5b5b5]">
          <ChevronUp size={9} strokeWidth={3} />
          <ChevronDown size={9} strokeWidth={3} />
        </div>
      </div>
      <div className="mt-[9px] flex justify-end gap-[6px] font-['Roboto',sans-serif] text-[11px]">
        <button type="button" className="h-[22px] w-[71px] border-2 border-[#aecbe8] bg-[#f1f3f5] leading-[18px]">
          Close
        </button>
        <button type="button" className="h-[22px] w-[71px] border border-[#c6c6c6] bg-[#ececec] leading-[18px]">
          Help
        </button>
      </div>
    </div>
    <svg viewBox="0 0 12 18" className="absolute top-[147px] left-[429px] h-[18px] w-[12px]" aria-hidden="true">
      <path d="M1 1v13l3-3 3 6 2-1-3-6h4z" fill="#fff" stroke="#444" />
    </svg>
  </div>
);

const App: React.FC = () => (
  <div className="relative flex h-screen overflow-hidden bg-[#fdfdfd] font-['Open_Sans',sans-serif]">
    <svg className="absolute h-0 w-0" aria-hidden="true">
      <defs>
        <linearGradient id="steel" x1="0" y1="0" x2="1" y2="1">
          <stop offset="0" stopColor="#d3e5f7" />
          <stop offset="1" stopColor="#6c93cb" />
        </linearGradient>
        <linearGradient id="heat" x1="0" y1="0" x2="1" y2="0">
          <stop offset="0" stopColor="#c03ad0" />
          <stop offset=".4" stopColor="#2f7fe0" />
          <stop offset="1" stopColor="#35c0b0" />
        </linearGradient>
      </defs>
    </svg>
    <div className="w-[3px] flex-none border-r border-[#8a8a8a] bg-[#cfcfcf]" />
    <div className="flex min-w-0 flex-1 flex-col">
      <Ribbon />
      <QuickAccess />
      <main className="flex min-h-0 flex-1">
        <FeatureLibrary />
        <div className="flex min-w-0 flex-1 flex-col">
          <div className="relative min-h-0 flex-1 overflow-hidden">
            <Model />
            <PathFinder />
          </div>
          <StatusBar />
        </div>
        <SideTabs />
        <svg viewBox="0 0 6 597" className="h-[597px] w-[6px] flex-none" aria-hidden="true">
          <path d="M0 188l6 8v283L0 494z" fill="#737373" />
          <path d="M0 560l6 12M0 566l6 12M0 572l6 12" stroke="#8a9a8a" />
        </svg>
      </main>
    </div>
    <FeatureSetDialog />
  </div>
);

export default App;
